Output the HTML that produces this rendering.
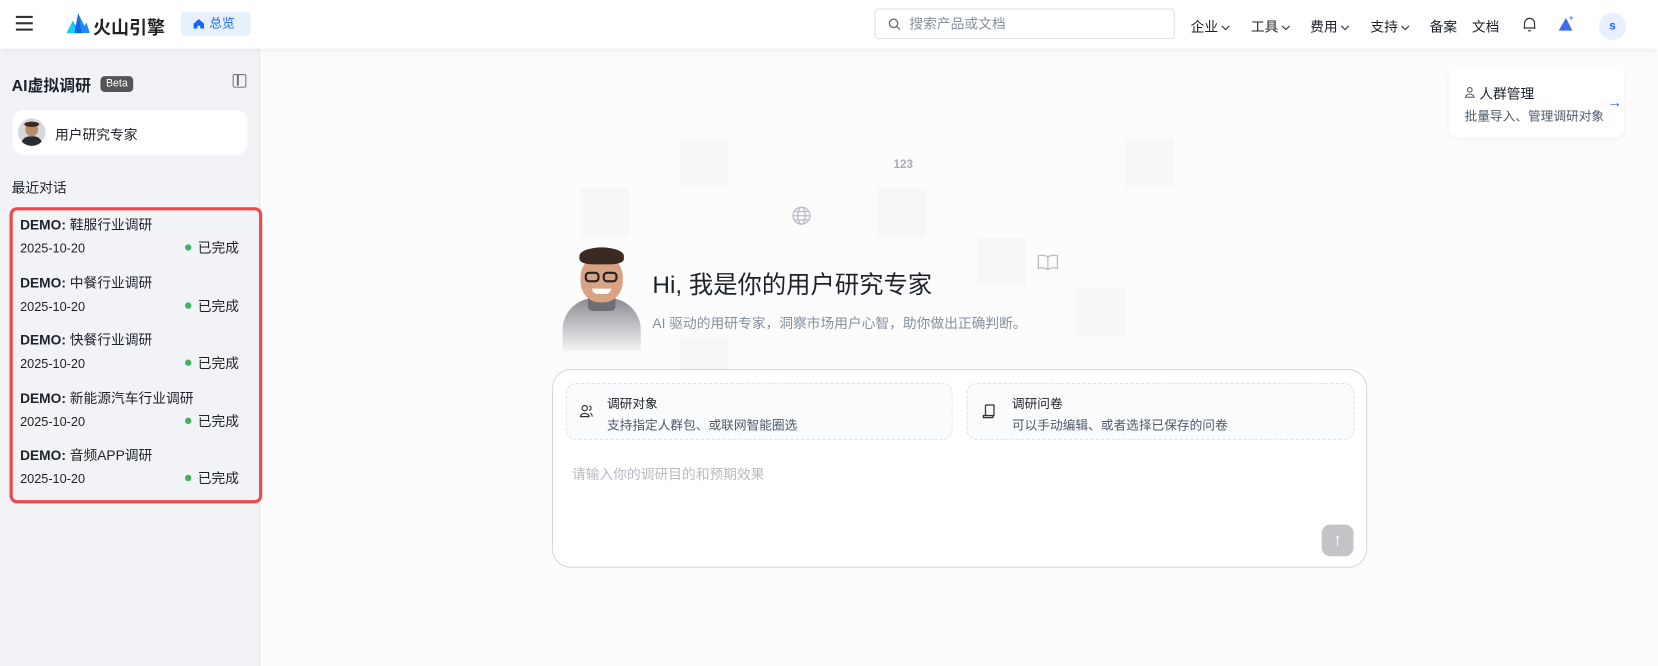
<!DOCTYPE html>
<html><head><meta charset="utf-8"><style>
*{box-sizing:border-box;margin:0;padding:0}
html,body{width:1658px;height:666px;overflow:hidden}
body{font-family:"Liberation Sans","Noto Sans CJK SC",sans-serif;background:#fcfcfd;color:#1d2129;position:relative}
#w{position:absolute;left:0;top:0;width:1568px;height:630px;transform:scale(1.05740);transform-origin:0 0}
.top{position:absolute;left:0;top:0;width:1568px;height:46px;background:#fff;box-shadow:0 2px 6px rgba(0,0,0,.06);z-index:5}
.abs{position:absolute}
.side{position:absolute;left:0;top:46px;width:246px;height:584px;background:#f2f3f7;border-right:1px solid #e5e6eb}
.nav{font-size:13px;color:#1d2129}
.nav svg{margin-left:3px;vertical-align:1px}
.item{position:absolute;left:19px;width:210px}
.item .t{font-size:13px;font-weight:bold;color:#1d2129}
.item .t span{font-weight:normal}
.item .d{font-size:12px;color:#1d2129;margin-top:7px}
.item .s{position:absolute;right:3px;top:22px;font-size:13px}
.item .s:before{content:"";display:inline-block;width:6px;height:6px;border-radius:50%;background:#3cb55c;margin-right:6px;vertical-align:2px}
.sq{position:absolute;width:46px;height:46px;background:#f6f7f9}
</style></head><body><div id="w">
<div class="top">
 <div class="abs" style="left:15px;top:15px;width:16px;height:2px;background:#333;box-shadow:0 6px 0 #333,0 12px 0 #333"></div>
 <svg class="abs" style="left:63px;top:12px" width="22" height="20" viewBox="0 0 26 22"><path d="M0 22 L7 8 L10 14 L13 0 L20 14 L22 10 L26 22Z" fill="#1e8bf5"/><path d="M0 22 L7 8 L11 22Z" fill="#11d0f0"/><path d="M13 0 L17 22 L9 22Z" fill="#1565e6"/></svg>
 <div class="abs" style="left:88px;top:12px;font-size:17px;font-weight:bold;color:#222">火山引擎</div>
 <div class="abs" style="left:171px;top:11px;width:66px;height:23px;background:#e8f0fe;border-radius:4px;color:#1664ff;font-size:12px;line-height:23px;padding-left:27px">总览
   <svg class="abs" style="left:12px;top:7px" width="10" height="9" viewBox="0 0 11 10"><path d="M5.5 0 L11 5 V10 H7 V7 H4 V10 H0 V5Z" fill="#1664ff"/></svg></div>
 <div class="abs" style="left:827px;top:8px;width:284px;height:29px;border:1px solid #dcdfe6;border-radius:4px;font-size:13px;color:#86909c;line-height:27px;padding-left:32px">搜索产品或文档
   <svg class="abs" style="left:12px;top:8px" width="12" height="12" viewBox="0 0 13 13"><circle cx="5.5" cy="5.5" r="4.3" fill="none" stroke="#666" stroke-width="1.3"/><path d="M8.7 8.7 L12 12" stroke="#666" stroke-width="1.3"/></svg></div>
 <div class="abs nav" style="left:1126px;top:15px">企业<svg width="8" height="5" viewBox="0 0 8 5"><path d="M0.5 0.5 L4 4 L7.5 0.5" fill="none" stroke="#333" stroke-width="1.1"/></svg></div>
 <div class="abs nav" style="left:1183px;top:15px">工具<svg width="8" height="5" viewBox="0 0 8 5"><path d="M0.5 0.5 L4 4 L7.5 0.5" fill="none" stroke="#333" stroke-width="1.1"/></svg></div>
 <div class="abs nav" style="left:1239px;top:15px">费用<svg width="8" height="5" viewBox="0 0 8 5"><path d="M0.5 0.5 L4 4 L7.5 0.5" fill="none" stroke="#333" stroke-width="1.1"/></svg></div>
 <div class="abs nav" style="left:1296px;top:15px">支持<svg width="8" height="5" viewBox="0 0 8 5"><path d="M0.5 0.5 L4 4 L7.5 0.5" fill="none" stroke="#333" stroke-width="1.1"/></svg></div>
 <div class="abs nav" style="left:1352px;top:15px">备案</div>
 <div class="abs nav" style="left:1392px;top:15px">文档</div>
 <svg class="abs" style="left:1440px;top:15px" width="13" height="16" viewBox="0 0 15 18"><path d="M2 13 V8 a5.5 5.5 0 0 1 11 0 V13 H1 H14 M6 16 H9" fill="none" stroke="#333" stroke-width="1.3"/></svg>
 <svg class="abs" style="left:1474px;top:14px" width="16" height="16" viewBox="0 0 16 16"><path d="M0 15 L7 3 L13 15Z" fill="#3a6df0"/><path d="M12 1 v4 M10 3 h4" stroke="#7aa0ff" stroke-width="1.2"/></svg>
 <div class="abs" style="left:1512px;top:12px;width:26px;height:26px;border-radius:50%;background:#e8efff;color:#1664ff;font-size:11px;font-weight:bold;text-align:center;line-height:26px">s</div>
</div>

<div class="side">
 <div class="abs" style="left:11px;top:24px;font-size:15px;font-weight:bold">AI虚拟调研</div>
 <div class="abs" style="left:95px;top:26px;width:31px;height:15px;background:#555;border-radius:4px;color:#fff;font-size:10px;text-align:center;line-height:15px">Beta</div>
 <div class="abs" style="left:220px;top:24px;width:13px;height:13px;border:1.5px solid #777;border-radius:2px"><div style="position:absolute;left:3px;top:0;width:1.5px;height:10px;background:#777"></div></div>
 <div class="abs" style="left:12px;top:58px;width:222px;height:42px;background:#fff;border-radius:10px">
  <div class="abs" style="left:5px;top:8px;width:26px;height:26px;border-radius:50%;background:#d5d7dc;overflow:hidden"><div style="position:absolute;left:7px;top:4px;width:12px;height:13px;border-radius:50%;background:#b88a6a"></div><div style="position:absolute;left:6px;top:3px;width:14px;height:5px;border-radius:50%;background:#3a2a22"></div><div style="position:absolute;left:3px;top:17px;width:20px;height:12px;border-radius:8px 8px 0 0;background:#2a2c30"></div></div>
  <div class="abs" style="left:40px;top:13px;font-size:13px">用户研究专家</div>
 </div>
 <div class="abs" style="left:11px;top:121px;font-size:13px">最近对话</div>
 <div class="abs" style="left:9px;top:150px;width:239px;height:280px;border:3px solid #f04848;border-radius:7px"></div>
</div>
<div class="item" style="top:202px"><div class="t">DEMO: <span>鞋服行业调研</span></div><div class="d">2025-10-20</div><div class="s">已完成</div></div>
<div class="item" style="top:257px"><div class="t">DEMO: <span>中餐行业调研</span></div><div class="d">2025-10-20</div><div class="s">已完成</div></div>
<div class="item" style="top:311px"><div class="t">DEMO: <span>快餐行业调研</span></div><div class="d">2025-10-20</div><div class="s">已完成</div></div>
<div class="item" style="top:366px"><div class="t">DEMO: <span>新能源汽车行业调研</span></div><div class="d">2025-10-20</div><div class="s">已完成</div></div>
<div class="item" style="top:420px"><div class="t">DEMO: <span>音频APP调研</span></div><div class="d">2025-10-20</div><div class="s">已完成</div></div>

<div class="sq" style="left:643px;top:131px"></div>
<div class="sq" style="left:1064px;top:131px"></div>
<div class="sq" style="left:549px;top:178px"></div>
<div class="sq" style="left:830px;top:178px"></div>
<div class="sq" style="left:924px;top:225px"></div>
<div class="sq" style="left:1018px;top:272px"></div>
<div class="sq" style="left:643px;top:319px;height:30px"></div>
<div class="abs" style="left:845px;top:150px;font-size:11px;color:#aab;font-weight:bold">123</div>
<svg class="abs" style="left:748px;top:194px" width="20" height="20" viewBox="0 0 20 20" fill="none" stroke="#b8bcc6" stroke-width="1.2"><circle cx="10" cy="10" r="8"/><ellipse cx="10" cy="10" rx="3.5" ry="8"/><path d="M2 10h16M3.5 6h13M3.5 14h13"/></svg>
<svg class="abs" style="left:981px;top:240px" width="20" height="16" viewBox="0 0 20 16" fill="none" stroke="#b8bcc6" stroke-width="1.2"><path d="M10 3 C7 1 4 1 1 2 V14 C4 13 7 13 10 15 C13 13 16 13 19 14 V2 C16 1 13 1 10 3 V15"/></svg>

<div class="abs" style="left:532px;top:230px;width:74px;height:100px">
 <div class="abs" style="left:0;top:52px;width:74px;height:50px;border-radius:30px 30px 0 0;background:linear-gradient(#8b8d92,#f4f4f6)"></div>
 <div class="abs" style="left:24px;top:48px;width:26px;height:16px;background:#6c6e73;border-radius:4px"></div>
 <div class="abs" style="left:17px;top:12px;width:40px;height:44px;border-radius:45%;background:#d9a283"></div>
 <div class="abs" style="left:16px;top:4px;width:42px;height:16px;border-radius:50% 50% 30% 30%;background:#3a2a22"></div>
 <div class="abs" style="left:21px;top:27px;width:14px;height:10px;border:2px solid #222;border-radius:4px"></div>
 <div class="abs" style="left:38px;top:27px;width:14px;height:10px;border:2px solid #222;border-radius:4px"></div>
 <div class="abs" style="left:28px;top:43px;width:18px;height:5px;background:#fff;border-radius:0 0 8px 8px"></div>
</div>
<div class="abs" style="left:617px;top:250px;font-size:23px;color:#1d2129">Hi, 我是你的用户研究专家</div>
<div class="abs" style="left:617px;top:295px;font-size:13px;color:#86909c">AI 驱动的用研专家，洞察市场用户心智，助你做出正确判断。</div>

<div class="abs" style="left:522px;top:349px;width:771px;height:188px;background:#fff;border:1px solid #d6d8dd;border-radius:18px">
 <div class="abs" style="left:12px;top:12px;width:366px;height:54px;background:#fafbfd;border:1px dashed #dde0e6;border-radius:10px">
  <svg class="abs" style="left:12px;top:19px" width="13" height="14" viewBox="0 0 13 14" fill="none" stroke="#333" stroke-width="1.1"><circle cx="5" cy="4" r="2.5"/><path d="M1 12 C1 8 9 8 9 12Z M9 2a2 2 0 0 1 0 4 M12 12 C12 10 11 9 10 9"/></svg>
  <div class="abs" style="left:38px;top:10px;font-size:12px">调研对象</div>
  <div class="abs" style="left:38px;top:30px;font-size:12px;color:#4e5969">支持指定人群包、或联网智能圈选</div>
 </div>
 <div class="abs" style="left:391px;top:12px;width:367px;height:54px;background:#fafbfd;border:1px dashed #dde0e6;border-radius:10px">
  <svg class="abs" style="left:14px;top:19px" width="13" height="14" viewBox="0 0 13 14" fill="none" stroke="#333" stroke-width="1.2"><path d="M3 1 H11 V11 H1 V13 H10 V11 M3 1 V11"/></svg>
  <div class="abs" style="left:42px;top:10px;font-size:12px">调研问卷</div>
  <div class="abs" style="left:42px;top:30px;font-size:12px;color:#4e5969">可以手动编辑、或者选择已保存的问卷</div>
 </div>
 <div class="abs" style="left:18px;top:88px;font-size:13px;color:#b7bbc2">请输入你的调研目的和预期效果</div>
 <div class="abs" style="left:727px;top:146px;width:30px;height:30px;border-radius:8px;background:#c2c4c8;color:#fff;text-align:center;line-height:30px;font-size:17px">↑</div>
</div>

<div class="abs" style="left:1370px;top:64px;width:166px;height:66px;background:#fff;border-radius:8px;box-shadow:0 1px 4px rgba(0,0,0,.05)">
 <svg class="abs" style="left:15px;top:18px" width="10" height="11" viewBox="0 0 10 11" fill="none" stroke="#555" stroke-width="1"><circle cx="5" cy="3" r="2.2"/><path d="M1 10 C1 6 9 6 9 10Z"/></svg>
 <div class="abs" style="left:29px;top:14px;font-size:13px">人群管理</div>
 <div class="abs" style="left:15px;top:37px;font-size:12px;color:#4e5969">批量导入、管理调研对象</div>
 <div class="abs" style="left:150px;top:24px;font-size:14px;color:#1664ff">→</div>
</div>
</div></body></html>
